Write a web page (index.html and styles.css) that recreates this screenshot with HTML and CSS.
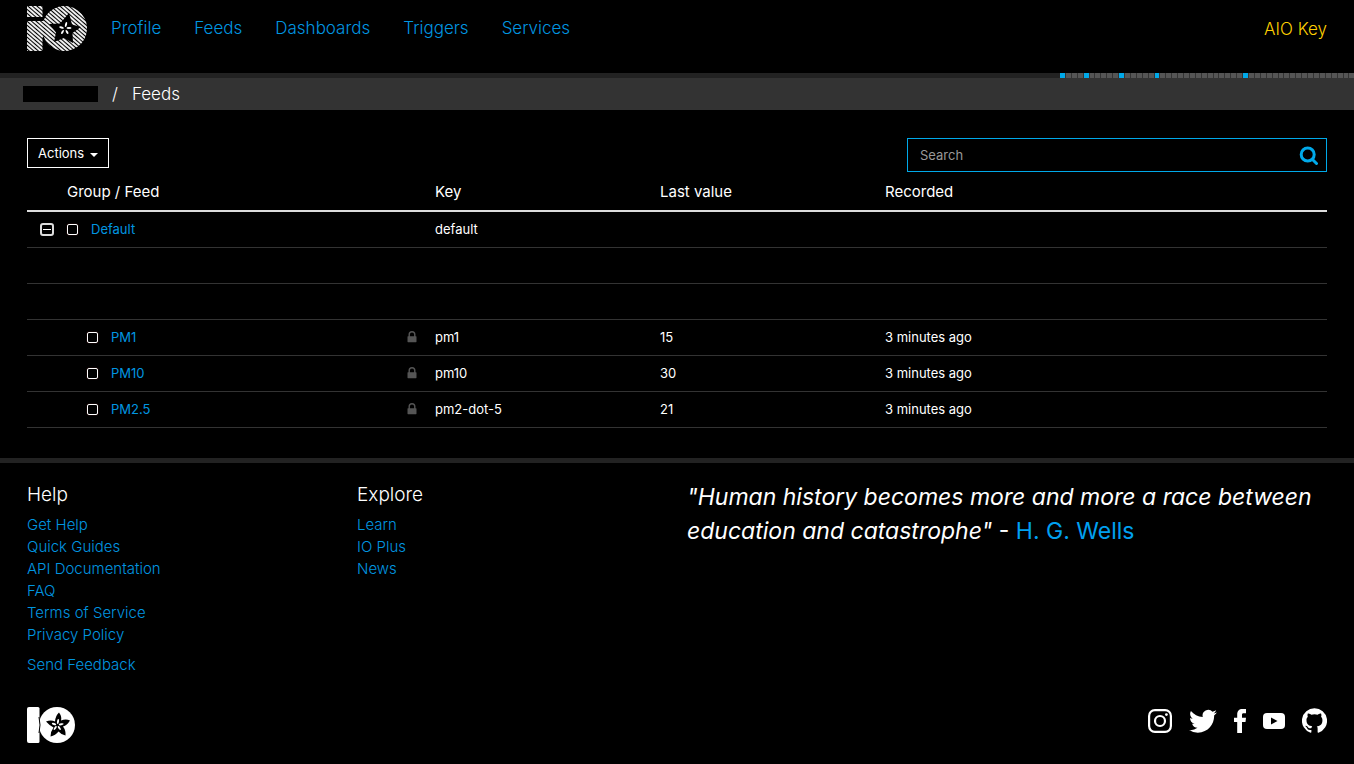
FILE: index.html
```
<!DOCTYPE html>
<html lang="en">
<head>
<meta charset="utf-8">
<title>Feeds</title>
<link rel="stylesheet" href="styles.css">
</head>
<body>
<svg class="symbols" aria-hidden="true">
  <symbol id="lock" viewBox="0 0 10 12"><path d="M2.2 6V3.6a2.8 2.8 0 0 1 5.6 0V6" fill="none" stroke="currentColor" stroke-width="1.4"/><rect x=".5" y="5.2" width="9" height="6" rx=".6" fill="currentColor"/></symbol>
</svg>
<header class="top">
  <a class="logo" href="#" aria-label="IO home">
    <svg width="60" height="45" viewBox="0 0 60 45">
      <defs>
        <pattern id="stripes" width="3" height="3" patternUnits="userSpaceOnUse" patternTransform="rotate(41)"><rect width="3" height="2" fill="#eee"/></pattern>
      </defs>
      <path fill="url(#stripes)" d="M0 0h15.500v11H0zM0 15h16.300A22.500 22.500 0 1 1 16.300 30L15.500 32V45H0z"/>
      <path d="M42 7l3 11.500L54 21l-8.500 6 .5 10-9-5-10 4 2-9.500-7-8.500 11-.5z"/>
      <g fill="#fff"><ellipse cx="39" cy="18.500" rx="1" ry="2.500" transform="rotate(15 39 18.500)"/><ellipse cx="42" cy="22" rx="2.500" ry="1"/><ellipse cx="40" cy="26" rx="1" ry="2.300" transform="rotate(-30 40 26)"/><ellipse cx="35.500" cy="26" rx="1" ry="2.300" transform="rotate(30 35.500 26)"/><ellipse cx="34.500" cy="21.500" rx="2.400" ry="1" transform="rotate(20 34.500 21.500)"/></g>
    </svg>
  </a>
  <nav class="nav">
    <a href="#">Profile</a><a href="#">Feeds</a><a href="#">Dashboards</a><a href="#">Triggers</a><a href="#">Services</a>
  </nav>
  <a class="key" href="#">AIO Key</a>
</header>
<div class="strip"><div class="lights">
<i class="on"></i><i></i><i></i><i></i><i class="on"></i><i></i><i></i><i></i><i></i><i></i>
<i class="on"></i><i></i><i></i><i></i><i></i><i></i><i class="on"></i><i></i><i></i><i></i>
<i></i><i></i><i></i><i></i><i></i><i></i><i></i><i></i><i></i><i></i>
<i></i><i class="on"></i><i></i><i></i><i></i><i></i><i></i><i></i><i></i><i></i>
<i></i><i></i><i></i><i></i><i></i><i></i><i></i><i></i><i></i><i></i>
</div></div>
<div class="crumbs"><span class="redacted"></span><span>/</span><span>Feeds</span></div>
<main class="main">
  <div class="tools">
    <button class="actions" type="button">Actions <span class="caret"></span></button>
    <form class="search">
      <input type="search" placeholder="Search" aria-label="Search">
      <button type="button" aria-label="Submit search"><svg width="20" height="20" viewBox="0 0 20 20" fill="none" stroke="currentColor"><circle cx="8.700" cy="9.500" r="6.500" stroke-width="3"/><path d="M13.500 14.500l4 4" stroke-width="3" stroke-linecap="round"/></svg></button>
    </form>
  </div>
  <table class="feeds">
    <thead><tr><th class="name">Group / Feed</th><th class="col">Key</th><th class="col">Last value</th><th>Recorded</th></tr></thead>
    <tbody>
      <tr><td><div class="group"><button class="fold" type="button" aria-label="Collapse group"></button><input type="checkbox" aria-label="Select Default"><a href="#">Default</a></div></td><td>default</td><td></td><td></td></tr>
      <tr><td></td><td></td><td></td><td></td></tr>
      <tr><td></td><td></td><td></td><td></td></tr>
      <tr><td><div class="feed"><input type="checkbox" aria-label="Select PM1"><a href="#">PM1</a><svg class="lock"><use href="#lock"/></svg></div></td><td>pm1</td><td>15</td><td>3 minutes ago</td></tr>
      <tr><td><div class="feed"><input type="checkbox" aria-label="Select PM10"><a href="#">PM10</a><svg class="lock"><use href="#lock"/></svg></div></td><td>pm10</td><td>30</td><td>3 minutes ago</td></tr>
      <tr><td><div class="feed"><input type="checkbox" aria-label="Select PM2.5"><a href="#">PM2.5</a><svg class="lock"><use href="#lock"/></svg></div></td><td>pm2-dot-5</td><td>21</td><td>3 minutes ago</td></tr>
    </tbody>
  </table>
</main>
<footer class="footer">
  <div class="columns">
    <section>
      <h2>Help</h2>
      <ul><li><a href="#">Get Help</a></li><li><a href="#">Quick Guides</a></li><li><a href="#">API Documentation</a></li><li><a href="#">FAQ</a></li><li><a href="#">Terms of Service</a></li><li><a href="#">Privacy Policy</a></li></ul>
      <a class="feedback" href="#">Send Feedback</a>
    </section>
    <section>
      <h2>Explore</h2>
      <ul><li><a href="#">Learn</a></li><li><a href="#">IO Plus</a></li><li><a href="#">News</a></li></ul>
    </section>
    <blockquote class="quote"><em>"Human history becomes more and more a race between education and catastrophe"</em> - <a href="#">H. G. Wells</a></blockquote>
  </div>
  <div class="bottom">
    <a href="#" aria-label="IO"><svg width="48" height="36" viewBox="0 0 48 36">
      <path fill="#fff" d="M2 0h9q1.500 0 1.500 1.500v33q0 1.500-1.500 1.500H2q-2 0-2-2V2q0-2 2-2z"/><circle cx="30" cy="18" r="18" fill="#fff"/><path d="M12 10q2 8 0 16" stroke="#000" stroke-width="1" fill="none"/>
      <path d="M32 5.500q3 4 2 8 5-2 9 0-3 5-7 6 3 4 2.500 9-4.500-1-7-4-3 4-8 5 0-5 3-9-4-2-7.500-6 5-2 9 0 .5-6 4-9z"/>
      <g fill="#fff"><ellipse cx="31" cy="14.500" rx="1" ry="2.500" transform="rotate(10 31 14.500)"/><ellipse cx="34.200" cy="17.300" rx="2.500" ry="1" transform="rotate(-10 34.200 17.300)"/><ellipse cx="32.300" cy="21" rx="1" ry="2.300" transform="rotate(-35 32.300 21)"/><ellipse cx="28.200" cy="21" rx="1" ry="2.300" transform="rotate(35 28.200 21)"/><ellipse cx="27" cy="17" rx="2.300" ry="1" transform="rotate(20 27 17)"/></g>
    </svg></a>
    <div class="social">
      <a href="#" aria-label="Instagram"><svg width="24" height="24" viewBox="0 0 24 24" fill="none" stroke="currentColor"><rect x="1.100" y="1.100" width="21.800" height="21.800" rx="5.800" stroke-width="2.200"/><circle cx="12" cy="12" r="5" stroke-width="2.200"/><circle cx="18.400" cy="5.600" r="1.400" fill="currentColor" stroke="none"/></svg></a>
      <a href="#" aria-label="Twitter"><svg width="28" height="24" viewBox="0 1.500 24 20.500" fill="currentColor"><path d="M23.950 4.570a10 10 0 0 1-2.820.77 4.960 4.960 0 0 0 2.160-2.720c-.95.560-2 .96-3.130 1.190a4.920 4.920 0 0 0-8.380 4.480C7.690 8.100 4.070 6.130 1.640 3.160a4.820 4.820 0 0 0-.67 2.480c0 1.710.87 3.210 2.190 4.100a4.900 4.900 0 0 1-2.230-.62v.06a4.920 4.920 0 0 0 3.950 4.830 5 5 0 0 1-2.210.08 4.940 4.940 0 0 0 4.600 3.420A9.870 9.870 0 0 1 0 19.540a13.990 13.990 0 0 0 7.550 2.210c9.050 0 14-7.500 14-13.980l-.02-.64a9.940 9.940 0 0 0 2.420-2.560z"/></svg></a>
      <a href="#" aria-label="Facebook"><svg width="12" height="24" viewBox="0 0 12 24" fill="currentColor"><path d="M3.200 24V13H0V8.800h3.200V5.500C3.200 2 5 0 8.500 0H12v4.200H9.800C8.300 4.200 8 4.800 8 6v2.800h4L11.500 13H8v11z"/></svg></a>
      <a href="#" aria-label="YouTube"><svg width="22" height="16" viewBox="0 0 22 16"><rect width="22" height="16" rx="4" fill="currentColor"/><path d="M8 4.500v7l6.500-3.500z"/></svg></a>
      <a href="#" aria-label="GitHub"><svg width="25" height="25" viewBox="0 0 24 24" fill="currentColor"><path d="M12 .3a12 12 0 0 0-3.800 23.400c.6.100.8-.3.800-.6v-2c-3.300.7-4-1.600-4-1.600-.6-1.400-1.400-1.800-1.400-1.800-1-.7.100-.7.100-.7 1.200 0 1.900 1.200 1.900 1.200 1 1.800 2.800 1.300 3.500 1 0-.8.400-1.300.7-1.600-2.700-.3-5.500-1.300-5.500-6 0-1.200.5-2.300 1.300-3.100-.2-.4-.6-1.600 0-3.200 0 0 1-.3 3.400 1.200a11.500 11.500 0 0 1 6 0c2.300-1.500 3.300-1.200 3.300-1.200.6 1.600.2 2.800 0 3.200.9.800 1.300 1.900 1.300 3.200 0 4.600-2.800 5.600-5.500 5.900.5.400.9 1 .9 2.200v3.300c0 .3.100.7.800.6A12 12 0 0 0 12 .3z"/></svg></a>
    </div>
  </div>
</footer>
</body>
</html>
```
FILE: styles.css
```
* { box-sizing: border-box; }
body { margin: 0; background: #000; color: #fff; font: 13px/18px Inter, "Open Sans", sans-serif; }
a { color: #0096e0; text-decoration: none; }
svg { display: block; }
button { font: inherit; color: inherit; background: none; border: 0; padding: 0; cursor: pointer; }
.symbols { width: 0; height: 0; position: absolute; }
.top { display: flex; align-items: flex-start; min-height: 73px; padding: 6px 27px 0; font-size: 17px; line-height: 24px; font-weight: 300; }
.nav { display: flex; gap: 33px; margin-left: 24px; padding-top: 10px; }
.key { margin-left: auto; padding-top: 11px; color: #ffd000; }
.strip { height: 5px; background: #222; display: flex; justify-content: flex-end; }
.lights { width: 294px; display: flex; gap: 1px; background: #333; }
.lights i { flex: 1; background: #555; }
.lights .on { background: #00a9e9; }
.crumbs { display: flex; align-items: center; gap: 14px; min-height: 32px; padding: 0 23px; background: #333; font-size: 17px; line-height: 24px; font-weight: 300; }
.redacted { width: 75px; height: 16px; background: #000; }
.main { padding: 28px 27px 30px; }
.tools { display: flex; justify-content: space-between; align-items: flex-start; }
.actions { display: flex; align-items: center; gap: 6px; height: 30px; padding: 0 10px; border: 1px solid #fff; }
.caret { margin-top: 4px; border: 4px solid transparent; border-top-color: #fff; border-bottom: 0; }
.search { display: flex; align-items: center; width: 420px; height: 34px; padding: 0 7px 0 12px; border: 1px solid #00a9e9; color: #00a9e9; }
.search input { flex: 1; min-width: 0; padding: 0; border: 0; outline: 0; background: none; color: #fff; font: inherit; }
.search input::placeholder { color: #999; opacity: 1; }
.feeds { width: 100%; table-layout: fixed; border-collapse: collapse; }
.feeds th { height: 39px; padding: 1px 8px 0; border-bottom: 2px solid #ddd; font-size: 15px; font-weight: 400; text-align: left; }
.feeds th.name { width: 400px; padding-left: 40px; }
.feeds th.col { width: 225px; }
.feeds td { height: 36px; padding: 0 8px; border-bottom: 1px solid #333; }
.group, .feed { display: flex; align-items: center; gap: 13px; }
.group { padding-left: 5px; }
.feed { padding-left: 52px; }
.feeds input { appearance: none; width: 11px; height: 11px; margin: 0; border: 1px solid #fff; border-radius: 2px; box-shadow: 0 0 1px #a44; }
.fold { width: 14px; height: 13px; border: 2px solid #ddd; border-radius: 3px; background: linear-gradient(#fff, #fff) center / 8px 1px no-repeat; }
.lock { width: 10px; height: 12px; margin-left: auto; margin-right: 2px; color: #555; }
.footer { border-top: 5px solid #222; padding: 21px 27px 20px; }
.columns { display: grid; grid-template-columns: 1fr 1fr 2fr; gap: 10px; font-size: 15px; line-height: 22px; font-weight: 300; }
.columns h2 { margin: 0 0 8px; font-size: 19px; line-height: 22px; font-weight: 300; }
.columns ul { margin: 0 0 8px; padding: 0; list-style: none; }
.feedback { display: block; }
.quote { margin: -4px 0 0; font-size: 23px; line-height: 34px; font-weight: 400; }
.quote a { color: #00a0f0; }
.bottom { display: flex; align-items: center; justify-content: space-between; margin-top: 31px; }
.social { display: flex; align-items: center; gap: 17px; margin-top: -8px; }
.social a { color: #fff; }
```
